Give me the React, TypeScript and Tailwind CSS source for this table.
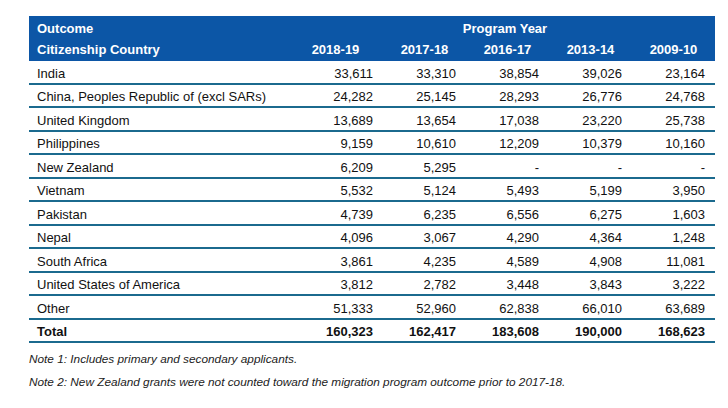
const years = ['2018-19', '2017-18', '2016-17', '2013-14', '2009-10'];

const rows: [string, string[]][] = [
  ['India', ['33,611', '33,310', '38,854', '39,026', '23,164']],
  ['China, Peoples Republic of (excl SARs)', ['24,282', '25,145', '28,293', '26,776', '24,768']],
  ['United Kingdom', ['13,689', '13,654', '17,038', '23,220', '25,738']],
  ['Philippines', ['9,159', '10,610', '12,209', '10,379', '10,160']],
  ['New Zealand', ['6,209', '5,295', '-', '-', '-']],
  ['Vietnam', ['5,532', '5,124', '5,493', '5,199', '3,950']],
  ['Pakistan', ['4,739', '6,235', '6,556', '6,275', '1,603']],
  ['Nepal', ['4,096', '3,067', '4,290', '4,364', '1,248']],
  ['South Africa', ['3,861', '4,235', '4,589', '4,908', '11,081']],
  ['United States of America', ['3,812', '2,782', '3,448', '3,843', '3,222']],
  ['Other', ['51,333', '52,960', '62,838', '66,010', '63,689']],
];

const total = ['160,323', '162,417', '183,608', '190,000', '168,623'];

const grid = 'grid grid-cols-[271px_83px_83px_83px_83px_83px]';

function Row({ label, values, bold }: { label: string; values: string[]; bold?: boolean }) {
  return (
    <div className={`${grid} h-[23.5px] items-end border-b-2 border-[#1b6a8e] pb-[2px] text-[13px] leading-[15px] text-[#111] ${bold ? 'font-bold' : ''}`}>
      <div className="pl-2">{label}</div>
      {values.map((v, i) => (
        <div key={i} className="pr-[10px] text-right">
          {v}
        </div>
      ))}
    </div>
  );
}

export default function App() {
  return (
    <div className="h-[408px] w-[728px] bg-white pt-4 pl-[29px] font-['Liberation_Sans',Arial,sans-serif]">
      <div className="w-[686px]">
        <div className="bg-[#0c56a6] text-[13px] font-bold leading-[15px] text-white">
          <div className="flex h-[22px] items-center">
            <div className="w-[271px] pl-2 pt-[2px]">Outcome</div>
            <div className="flex-1 pr-[5px] pt-[2px] text-center">Program Year</div>
          </div>
          <div className={`${grid} h-[23px] items-center`}>
            <div className="pl-2">Citizenship Country</div>
            {years.map((y, i) => (
              <div key={y} className={`text-center ${i === 0 ? 'pr-3' : ''}`}>
                {y}
              </div>
            ))}
          </div>
        </div>
        {rows.map(([label, values]) => (
          <Row key={label} label={label} values={values} />
        ))}
        <Row label="Total" values={total} bold />
      </div>
      <div className="mt-[9px] text-[11.8px] italic leading-[14px] text-[#222]">
        Note 1: Includes primary and secondary applicants.
      </div>
      <div className="mt-[9px] text-[11.8px] italic leading-[14px] text-[#222]">
        Note 2: New Zealand grants were not counted toward the migration program outcome prior to 2017-18.
      </div>
    </div>
  );
}
